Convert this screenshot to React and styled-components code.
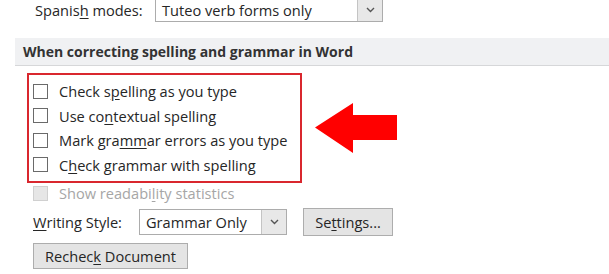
import React from "react";
import styled, { createGlobalStyle } from "styled-components";

const GlobalStyle = createGlobalStyle`
    html, body {
        margin: 0;
        padding: 0;
        background: #ffffff;
        overflow: hidden;
    }
    body {
        font-family: "Open Sans", "Noto Sans", sans-serif;
        font-size: 14.6px;
        color: #262626;
    }
`;

const Page = styled.div`
    width: 609px;
    height: 274px;
    display: flex;
    flex-direction: column;
`;

const TopRow = styled.div`
    display: flex;
    align-items: center;
    height: 20px;
    padding-left: 35px;
    line-height: 20px;
`;

const Label = styled.span`
    width: ${props => props.width}px;
    flex-shrink: 0;
    white-space: nowrap;
`;

const Select = styled.div`
    display: flex;
    align-items: stretch;
    flex-shrink: 0;
    width: ${props => props.width}px;
    height: ${props => props.height}px;
    box-sizing: border-box;
    border: 1px solid #acacac;
    background: #ffffff;
`;

const SelectValue = styled.div`
    flex: 1;
    display: flex;
    align-items: center;
    padding-left: 6px;
    white-space: nowrap;
`;

const SelectArrow = styled.div`
    width: 24px;
    display: flex;
    align-items: center;
    justify-content: center;
    background: #e8e8e8;
    border-left: 1px solid #c4c4c4;
`;

const SectionHeader = styled.div`
    margin: 18px 0 0 15px;
    height: 27px;
    display: flex;
    align-items: center;
    padding-left: 8px;
    background: #f0f1f3;
    border-bottom: 1px solid #d6d7d9;
    font-size: 14px;
    font-weight: 700;
    color: #333333;
`;

const HighlightRow = styled.div`
    display: flex;
    align-items: center;
    margin: 7px 0 0 27px;
`;

const RedBox = styled.div`
    width: 275px;
    box-sizing: border-box;
    border: 2px solid #d9272e;
    padding: 4px 0 4px 4px;
`;

const CheckRow = styled.label`
    display: flex;
    align-items: center;
    height: ${props => props.height || 24.5}px;
    padding-left: ${props => props.indent || 0}px;
    color: ${props => (props.disabled ? "#a6a6a6" : "#262626")};
    white-space: nowrap;
`;

const Box = styled.span`
    width: 15px;
    height: 15px;
    box-sizing: border-box;
    margin-right: 11px;
    flex-shrink: 0;
    border: 1px solid ${props => (props.disabled ? "#d0d0d0" : "#6a6a6a")};
    background: ${props => (props.disabled ? "#e6e6e6" : "#ffffff")};
`;

const Arrow = styled.svg`
    margin-left: 13px;
    display: block;
`;

const StyleRow = styled.div`
    display: flex;
    align-items: center;
    padding-left: 33px;
    margin-top: 5px;
    height: 28px;
`;

const Button = styled.div`
    display: flex;
    align-items: center;
    justify-content: center;
    width: ${props => props.width}px;
    height: ${props => props.height}px;
    box-sizing: border-box;
    border: 1px solid #adadad;
    background: #e4e4e4;
    margin-left: ${props => props.offset || 0}px;
    white-space: nowrap;
`;

const ButtonRow = styled.div`
    display: flex;
    padding-left: 33px;
    margin-top: 7px;
`;

const Key = styled.span`
    text-decoration: underline;
    text-underline-offset: 2px;
`;

const Chevron = () => (
    <svg width="9" height="6" viewBox="0 0 9 6">
        <path d="M1 1 L4.5 4.5 L8 1" fill="none" stroke="#555" strokeWidth="1.4" />
    </svg>
);

const options = [
    <>Check s<Key>p</Key>elling as you type</>,
    <>Use co<Key>n</Key>textual spelling</>,
    <>Mark gra<Key>mm</Key>ar errors as you type</>,
    <>C<Key>h</Key>eck grammar with spelling</>,
];

export default function App() {
    return (
        <Page>
            <GlobalStyle />
            <TopRow>
                <Label width={120}>Spanis<Key>h</Key> modes:</Label>
                <Select width={228} height={24}>
                    <SelectValue>Tuteo verb forms only</SelectValue>
                    <SelectArrow><Chevron /></SelectArrow>
                </Select>
            </TopRow>
            <SectionHeader>When correcting spelling and grammar in Word</SectionHeader>
            <HighlightRow>
                <RedBox>
                    {options.map((text, i) => (
                        <CheckRow key={i}>
                            <Box />
                            <span>{text}</span>
                        </CheckRow>
                    ))}
                </RedBox>
                <Arrow width="82" height="50" viewBox="0 0 82 50">
                    <polygon points="0,24.5 38,0 38,12 82,12 82,37 38,37 38,50" fill="#ff0000" />
                </Arrow>
            </HighlightRow>
            <CheckRow disabled height={20} indent={33}>
                <Box disabled />
                <span>Show readabi<Key>l</Key>ity statistics</span>
            </CheckRow>
            <StyleRow>
                <Label width={106}><Key>W</Key>riting Style:</Label>
                <Select width={148} height={26}>
                    <SelectValue>Grammar Only</SelectValue>
                    <SelectArrow><Chevron /></SelectArrow>
                </Select>
                <Button width={90} height={28} offset={16}>
                    <span>Se<Key>t</Key>tings...</span>
                </Button>
            </StyleRow>
            <ButtonRow>
                <Button width={155} height={26}>
                    <span>Rechec<Key>k</Key> Document</span>
                </Button>
            </ButtonRow>
        </Page>
    );
}
